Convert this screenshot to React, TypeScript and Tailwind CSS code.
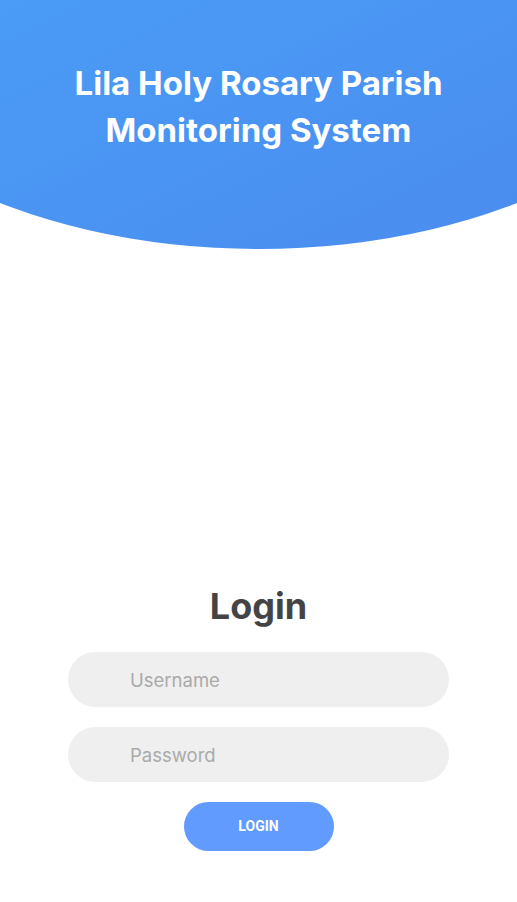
export default function App() {
  return (
    <div className="min-h-[902px] bg-white" style={{ fontFamily: "Inter, 'Noto Sans', sans-serif" }}>
      <header className="h-[250px] bg-gradient-to-br from-[#4a9cf6] to-[#4a8cef] [clip-path:ellipse(446px_249px_at_50%_0)] flex items-center justify-center pb-[36px]">
        <h1 className="text-white font-bold text-[33px] leading-[47px] text-center">
          Lila Holy Rosary Parish
          <br />
          Monitoring System
        </h1>
      </header>

      <main className="flex flex-col items-center pt-[329px]">
        <h2 className="text-[36px] font-bold leading-[54px] text-[#444444]">Login</h2>
        <form className="w-[381px] mt-[19px] flex flex-col gap-[20px]">
          <input
            type="text"
            placeholder="Username"
            className="h-[55px] w-full rounded-full bg-[#efefef] pl-[62px] text-[18.5px] text-[#444] placeholder:text-[#aaaaaa] outline-none"
          />
          <input
            type="password"
            placeholder="Password"
            className="h-[55px] w-full rounded-full bg-[#efefef] pl-[62px] text-[18.5px] text-[#444] placeholder:text-[#aaaaaa] outline-none"
          />
          <button
            type="button"
            className="self-center w-[150px] h-[49px] rounded-full bg-[#619bfd] text-white text-[14px] font-bold"
            style={{ fontFamily: "Roboto, 'Liberation Sans', sans-serif" }}
          >
            LOGIN
          </button>
        </form>
      </main>
    </div>
  );
}
